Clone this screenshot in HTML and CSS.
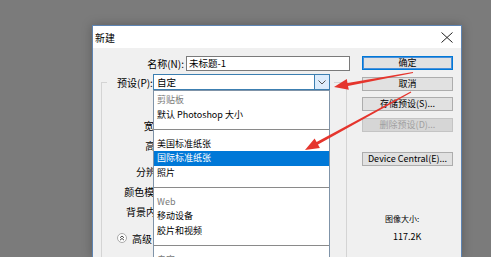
FILE: index.html
```html
<!DOCTYPE html>
<html lang="zh-CN">
<head>
    <meta charset="UTF-8">
    <meta name="viewport" content="width=device-width, initial-scale=1.0">
    <title>新建</title>
    <link rel="stylesheet" href="styles.css">
</head>
<body>
    <div class="dialog">
        <div class="titlebar">
            <span class="title">新建</span>
            <span class="close">
                <svg width="12" height="11" viewBox="0 0 12 11"><path d="M0.5 0.5L11.5 10.5M11.5 0.5L0.5 10.5" stroke="#222" stroke-width="1" fill="none"/></svg>
            </span>
        </div>
        <div class="dialog-body">
            <div class="form">
                <div class="name-row">
                    <span class="label">名称(N):</span>
                    <div class="textbox">未标题-1</div>
                </div>
                <fieldset class="group">
                    <legend class="preset">
                        <div class="preset-inner">
                            <span class="preset-label">预设(P):</span>
                            <div class="combo">
                                <span class="combo-value">自定</span>
                                <span class="combo-btn">
                                    <svg width="8" height="5" viewBox="0 0 8 5"><path d="M0.5 0.5L4 4L7.5 0.5" stroke="#555" stroke-width="1" fill="none"/></svg>
                                </span>
                                <ul class="combo-list">
                                    <li class="header">剪贴板</li>
                                    <li>默认 Photoshop 大小</li>
                                    <li class="sep"></li>
                                    <li>美国标准纸张</li>
                                    <li class="selected">国际标准纸张</li>
                                    <li>照片</li>
                                    <li class="sep"></li>
                                    <li class="header">Web</li>
                                    <li>移动设备</li>
                                    <li>胶片和视频</li>
                                    <li class="sep"></li>
                                    <li class="header">自定</li>
                                </ul>
                            </div>
                        </div>
                    </legend>
                    <div class="field-row first"><span class="label">宽度(W):</span></div>
                    <div class="field-row"><span class="label">高度(H):</span></div>
                    <div class="field-row gap"><span class="label">分辨率(R):</span></div>
                    <div class="field-row"><span class="label">颜色模式(M):</span></div>
                    <div class="field-row"><span class="label">背景内容(C):</span></div>
                    <div class="advanced">
                        <span class="adv-icon">
                            <svg width="10" height="10" viewBox="0 0 10 10"><circle cx="5" cy="5" r="4.5" fill="#fff" stroke="#a9a9a9"/><path d="M3 4.8L5 3L7 4.8M3 7.2L5 5.4L7 7.2" stroke="#333" stroke-width="0.9" fill="none"/></svg>
                        </span>
                        <span>高级</span>
                    </div>
                </fieldset>
            </div>
            <div class="buttons">
                <button class="btn default">确定</button>
                <button class="btn">取消</button>
                <button class="btn">存储预设(S)...</button>
                <button class="btn" disabled>删除预设(D)...</button>
                <button class="btn device">Device Central(E)...</button>
                <div class="size-label">图像大小:</div>
                <div class="size-value">117.2K</div>
            </div>
        </div>
    </div>

    <svg class="annotations" width="491" height="257" viewBox="0 0 491 257">
        <polygon fill="#e5352d" points="413.1,73.1 348.0,85.9 348.8,89.8 334,87 346.8,79.0 347.5,83.0 412.9,71.9"/>
        <polygon fill="#e5352d" points="411.3,92.5 318.0,144.6 319.9,148.1 305,150 314.6,138.5 316.6,142.0 410.7,91.5"/>
    </svg>
</body>
</html>
```

FILE: styles.css
```css
* {
    box-sizing: border-box;
}
body {
    margin: 0;
    padding: 25px 0 0 92px;
    height: 257px;
    overflow: hidden;
    background-color: #7b7b7b;
    font-family: "Noto Sans CJK SC", sans-serif;
    font-size: 9px;
    color: #000;
}
.dialog {
    width: 370px;
    height: 232px;
    border: 1px solid #5d84b3;
    border-bottom: none;
    background-color: #f0f0f0;
    box-shadow: 0 0 10px rgba(0, 0, 0, 0.25);
    overflow: hidden;
}
.titlebar {
    height: 22px;
    background-color: #fff;
    display: flex;
    align-items: center;
    justify-content: space-between;
    padding: 0 8px 0 2px;
}
.title {
    font-size: 10px;
}
.close svg {
    display: block;
}
.dialog-body {
    display: flex;
    padding-top: 8px;
}
.form {
    width: 257px;
}
.label {
    font-size: 10px;
    white-space: nowrap;
    text-align: right;
}
.name-row {
    display: flex;
    align-items: center;
    height: 15px;
}
.name-row .label {
    width: 91px;
    margin-right: 2px;
}
.textbox {
    width: 164px;
    height: 15px;
    border: 1px solid #7a7a7a;
    background-color: #fff;
    padding-left: 2px;
    line-height: 13px;
    font-size: 9.5px;
}
.group {
    margin: 3px 0 0 8px;
    width: 246px;
    height: 183px;
    min-width: 0;
    padding: 0;
    border: 1px solid #d4d4d4;
    border-bottom: none;
}
.preset {
    margin-left: 5px;
    padding: 0 4px 0 10px;
}
.preset-inner {
    display: flex;
    align-items: center;
    height: 16px;
}
.preset-label {
    width: 36px;
    font-size: 10px;
    white-space: nowrap;
}
.combo {
    position: relative;
    display: flex;
    width: 177px;
    height: 16px;
    border: 1px solid #3c7fb1;
    background-color: #fff;
}
.combo-value {
    flex: 1;
    padding-left: 3px;
    line-height: 14px;
    font-size: 9.5px;
}
.combo-btn {
    width: 15px;
    display: flex;
    align-items: center;
    justify-content: center;
    background-color: #dcecfc;
    border-left: 1px solid #3c7fb1;
}
.combo-list {
    position: absolute;
    top: 15px;
    left: -1px;
    width: 177px;
    height: 167px;
    margin: 0;
    padding: 2px 0 0;
    list-style: none;
    background-color: #fff;
    border: 1px solid #7f93a8;
    border-bottom: none;
    overflow: hidden;
    z-index: 2;
}
.combo-list li {
    height: 14.5px;
    line-height: 14.5px;
    padding-left: 3px;
    white-space: nowrap;
}
.combo-list .header {
    color: #7a7a7a;
}
.combo-list .selected {
    background-color: #0078d7;
    color: #fff;
}
.combo-list .sep {
    position: relative;
}
.combo-list .sep::before {
    content: "";
    position: absolute;
    left: 0;
    right: 0;
    top: 7px;
    height: 1px;
    background-color: #8a8a8a;
}
.field-row {
    display: flex;
    height: 20px;
    align-items: center;
}
.field-row .label {
    width: 80px;
}
.field-row.first {
    margin-top: 25px;
}
.field-row.gap {
    margin-top: 6px;
}
.advanced {
    display: flex;
    align-items: center;
    height: 20px;
    margin-top: 7px;
    padding-left: 15px;
    font-size: 10px;
}
.adv-icon {
    width: 10px;
    height: 10px;
    margin-right: 5px;
}
.adv-icon svg {
    display: block;
}
.buttons {
    display: flex;
    flex-direction: column;
    width: 91px;
    margin-left: 12px;
}
.btn {
    height: 14px;
    margin-top: 6.5px;
    padding: 0;
    border: 1px solid #adadad;
    background-color: #e1e1e1;
    font-family: inherit;
    font-size: 9px;
    line-height: 12px;
    color: #000;
}
.btn:first-child {
    margin-top: 0;
}
.btn.default {
    border-color: #0078d7;
    box-shadow: inset 0 0 0 1px #4a90d9;
}
.btn:disabled {
    background-color: #d6d6d6;
    border-color: #c4c4c4;
    color: #a0a0a0;
}
.btn.device {
    margin-top: 20.5px;
}
.size-label {
    margin-top: 46px;
    padding-left: 23px;
    line-height: 14px;
    font-size: 8px;
}
.size-value {
    margin-top: 4px;
    padding-left: 31px;
    line-height: 14px;
}
.annotations {
    position: absolute;
    top: 0;
    left: 0;
    pointer-events: none;
    z-index: 10;
}
```
